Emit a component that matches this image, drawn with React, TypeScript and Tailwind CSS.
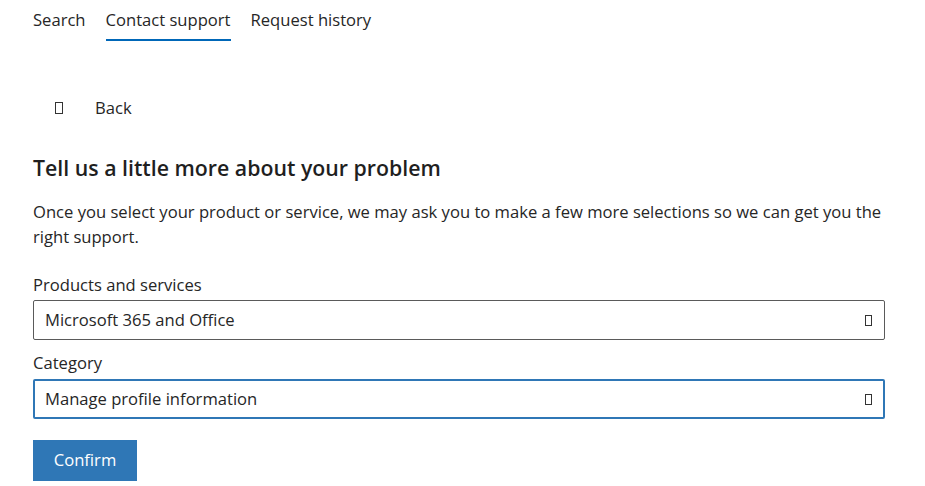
export default function App() {
  const font = { fontFamily: '"Open Sans", "Noto Sans", Arial, sans-serif' };
  return (
    <div className="min-h-[486px] w-[925px] bg-white text-[#262626]" style={font}>
      <div className="px-[33px] w-[918px]">
        <nav className="flex gap-[20px] pt-[8px] text-[16.6px] leading-[24px]">
          <div className="pb-[7px] border-b-2 border-transparent">Search</div>
          <div className="pb-[7px] border-b-2 border-[#0067b8]">Contact support</div>
          <div className="pb-[7px] border-b-2 border-transparent">Request history</div>
        </nav>
        <div className="mt-[55px] flex items-center h-[24px] text-[16.6px]">
          <span className="ml-[22px] inline-block w-[8px] h-[12px] border border-[#333]" />
          <span className="ml-[32px]">Back</span>
        </div>
        <h1 className="mt-[33px] text-[21.3px] leading-[30px] font-semibold text-[#1f1f1f]">
          Tell us a little more about your problem
        </h1>
        <p className="mt-[16px] text-[16.6px] leading-[25px]">
          Once you select your product or service, we may ask you to make a few more selections so we can get you the right support.
        </p>
        <div className="mt-[24px] text-[16.6px] leading-[24px]">Products and services</div>
        <div className="mt-[3px] h-[40px] flex items-center justify-between border border-[#5a5a5a] rounded-[2px] pl-[11px] pr-[12px] pt-[1px] text-[16.6px]">
          <span>Microsoft 365 and Office</span>
          <span className="inline-block w-[7px] h-[11px] border border-[#333]" />
        </div>
        <div className="mt-[11px] text-[16.6px] leading-[24px]">Category</div>
        <div className="mt-[4px] h-[40px] flex items-center justify-between border-2 border-[#2f77b6] rounded-[2px] pl-[10px] pr-[11px] pt-[1px] text-[16.6px]">
          <span>Manage profile information</span>
          <span className="inline-block w-[7px] h-[11px] border border-[#333]" />
        </div>
        <button className="mt-[21px] h-[41px] w-[104px] bg-[#2f77b6] text-white text-[16.6px] flex items-center justify-center">
          Confirm
        </button>
      </div>
    </div>
  );
}
